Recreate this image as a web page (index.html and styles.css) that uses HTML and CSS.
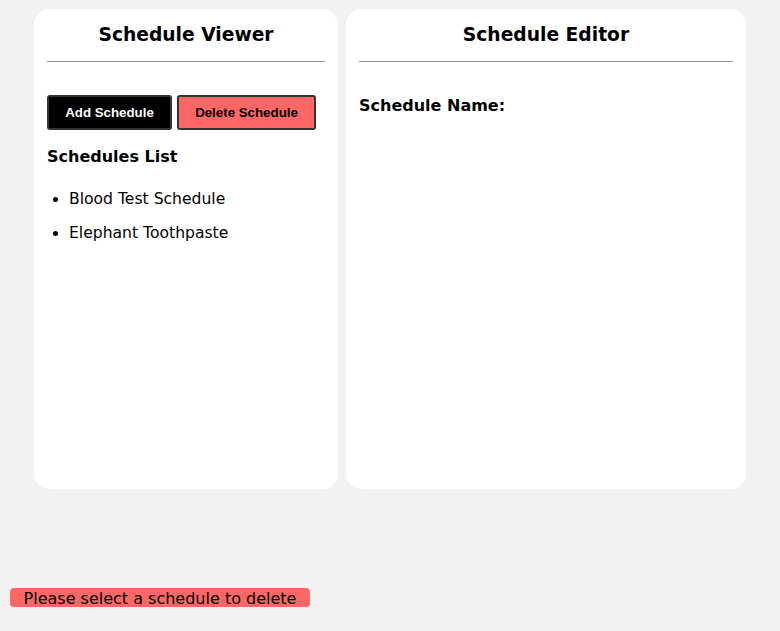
FILE: index.html
```html
<!DOCTYPE html>
<html>
<head>
<meta charset="utf-8">
<link rel="stylesheet" href="styles.css">
</head>
<body>
<div class="main">
  <section class="card viewer">
    <h2 class="title">Schedule Viewer</h2>
    <hr class="rule">
    <div class="buttons">
      <button class="btn btn-add">Add Schedule</button>
      <button class="btn btn-del">Delete Schedule</button>
    </div>
    <h3 class="subtitle">Schedules List</h3>
    <ul class="list">
      <li>Blood Test Schedule</li>
      <li>Elephant Toothpaste</li>
    </ul>
  </section>
  <section class="card editor">
    <h2 class="title">Schedule Editor</h2>
    <hr class="rule">
    <div class="field-label">Schedule Name:</div>
  </section>
</div>
<div class="message">Please select a schedule to delete</div>
</body>
</html>
```
FILE: styles.css
```css
html, body {
  margin: 0;
  padding: 0;
  background: #f2f2f2;
  font-family: "DejaVu Sans", Verdana, sans-serif;
  color: #000;
}
.main {
  width: 712px;
  margin: 9px auto 0;
  display: flex;
  gap: 8px;
}
.card {
  background: #fff;
  border-radius: 15px;
  height: 480px;
  box-sizing: border-box;
  padding: 14px 13px 13px;
}
.viewer { width: 304px; }
.editor { width: 400px; }
.title {
  margin: 0;
  font-size: 18.7px;
  line-height: 24px;
  text-align: center;
  font-weight: bold;
}
.rule {
  border: 0;
  border-top: 1px solid #999;
  margin: 14px 0 0;
  height: 0;
}
.buttons {
  display: flex;
  gap: 5px;
  margin-top: 33px;
}
.btn {
  font-family: "Liberation Sans", Arial, sans-serif;
  font-weight: bold;
  font-size: 13.3px;
  height: 35px;
  border: 2px solid #333;
  border-radius: 3px;
  padding: 0;
  cursor: pointer;
}
.btn-add { background: #000; color: #fff; width: 125px; }
.btn-del { background: #ff6666; color: #000; width: 139px; }
.subtitle {
  margin: 17px 0 0;
  font-size: 16px;
  line-height: 20px;
  font-weight: bold;
}
.list {
  margin: 22px 0 0;
  padding-left: 22px;
  font-size: 15.6px;
  line-height: 20px;
}
.list li { margin-bottom: 14px; }
.field-label {
  margin-top: 34px;
  font-size: 16px;
  line-height: 20px;
  font-weight: bold;
}
.message {
  margin: 99px 0 0 10px;
  width: 300px;
  height: 19px;
  line-height: 21px;
  background: #ff6666;
  border-radius: 4px;
  text-align: center;
  font-size: 16px;
}
```
